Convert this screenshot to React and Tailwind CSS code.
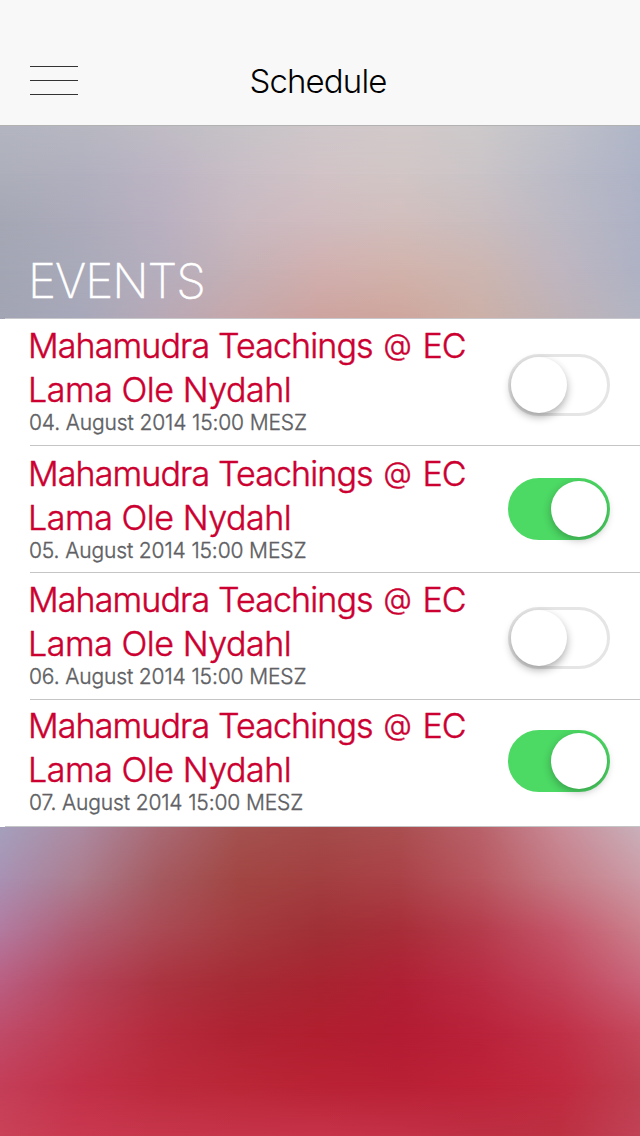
const EVENTS = [
  { date: '04. August 2014 15:00 MESZ', on: false, text: 'pt-[5px]', toggle: 'mt-[35px]' },
  { date: '05. August 2014 15:00 MESZ', on: true, text: 'pt-[6px]', toggle: 'mt-[32px]' },
  { date: '06. August 2014 15:00 MESZ', on: false, text: 'pt-[5px]', toggle: 'mt-[34px]' },
  { date: '07. August 2014 15:00 MESZ', on: true, text: 'pt-[4px]', toggle: 'mt-[30px]' },
];

// Colour grids for the soft backdrop: each row is a horizontal blend,
// and neighbouring rows fade into each other.
const SKY = [
  '#b3b5c0 #b6b7c1 #c0bcc5 #c6c3c7 #cfc7ca #d2c9ca #cdc9ca #c0c1ca #b0b6c7',
  '#adafba #b1b0bf #bcb4c3 #c9bec6 #d1c3c6 #d2c6c6 #cac4c7 #bbbbc7 #aeb3c6',
  '#a5a7b5 #acabbb #b9b0c0 #c9b9c0 #d0bbbf #d1bebc #cabdbf #bcb9c4 #aeb2c5',
  '#a3a6b4 #a9aab9 #b5aebd #c5b1b6 #d1b0af #d2b3ac #cdb6b1 #bfb6c0 #aeb2c4',
  '#a2a4b3 #a7a8ba #b8a9b6 #c6a7aa #cda39f #cea69d #cbb0a7 #bfb2b6 #b3b5c3',
];

const EMBER = [
  '#a5a0bd #ac8ba2 #a96a74 #a45250 #a44b4a #ab4f51 #b9626a #c98c98 #c9b0ba',
  '#a991b4 #ac7d8e #a55a60 #a24643 #a33f40 #aa4248 #b8565f #c47b85 #cc9ba6',
  '#b27ba0 #b05e74 #aa4a54 #a43b3f #a03036 #a82e39 #b53c4c #c4566a #cb808c',
  '#ba5f82 #b4445b #ab3441 #a62b35 #a82430 #b02035 #b92c43 #c14258 #c9647a',
  '#bf4b69 #bd3a50 #b52b3d #af2232 #b11f2f #b31c33 #b9223a #c02f46 #c5485c',
  '#c43e58 #c13048 #bb2a3c #ba2737 #b92234 #b92035 #bd2238 #c0293f #bd3f50',
  '#c94257 #c8384f #c6364b #c5344a #c6334a #c33147 #bd2f43 #bc3042 #c24256',
];

const blend = (row) => `linear-gradient(to right, ${row.split(' ').join(', ')})`;

function Backdrop({ grid }) {
  return (
    <div className="absolute inset-0 flex flex-col">
      {grid.slice(1).map((row, i) => (
        <div key={row} className="flex flex-1" style={{ backgroundImage: blend(grid[i]) }}>
          <div
            className="flex-1 [mask-image:linear-gradient(to_bottom,transparent,black)]"
            style={{ backgroundImage: blend(row) }}
          />
        </div>
      ))}
    </div>
  );
}

function Toggle({ on, className }) {
  return (
    <button
      role="switch"
      aria-checked={on}
      className={`flex h-[62px] w-[102px] shrink-0 rounded-full border-[3px] ${
        on ? 'justify-end border-[#4cd964] bg-[#4cd964]' : 'border-[#e5e5e5] bg-white'
      } ${className}`}
    >
      <span
        className={`size-14 rounded-full bg-white ${
          on ? 'shadow-[0_3px_8px_rgba(0,0,0,0.28)]' : 'shadow-[0_4px_8px_rgba(0,0,0,0.32)]'
        }`}
      />
    </button>
  );
}

export default function App() {
  return (
    <div className="flex h-[1136px] w-[640px] flex-col overflow-hidden bg-white font-['Inter',sans-serif] font-light">
      <header className="grid h-[126px] shrink-0 grid-cols-[1fr_auto_1fr] border-b border-[#b2b2b2] bg-[#f8f8f8] px-[30px] pt-[60px]">
        <button aria-label="Menu" className="mt-1.5 flex h-[29px] w-12 flex-col justify-between">
          <span className="h-px w-full bg-[#333]" />
          <span className="h-px w-full bg-[#333]" />
          <span className="h-px w-full bg-[#333]" />
        </button>
        <h1 className="-mt-px mr-[4px] h-[44px] text-[33px] leading-[44px] tracking-[-0.85px] text-black">Schedule</h1>
      </header>

      <section className="relative flex h-[192px] shrink-0 items-end px-[28px]">
        <Backdrop grid={SKY} />
        <h2 className="relative mb-[7px] text-[47.5px] font-extralight leading-[60px] tracking-[-1px] text-white [-webkit-text-stroke:0.4px]">
          EVENTS
        </h2>
      </section>

      <main className="flex h-[509px] shrink-0 flex-col bg-white">
        <div className="flex h-px shrink-0">
          <div className="w-[5px] bg-[#a2a4b3]" />
          <div className="flex-1 bg-[#c8c7cc]" />
        </div>
        {EVENTS.map((event, i) => (
          <div key={event.date} className="flex h-[127px] flex-col">
            <div className="flex flex-1 justify-between pr-[30px] pl-[28px]">
              <div className={event.text}>
                <p className="text-[34px] leading-[44px] tracking-[-0.45px] whitespace-nowrap text-[#cc0030] [-webkit-text-stroke:0.45px]">
                  <span className="tracking-[-0.87px]">
                    Mahamudra Teachings{' '}
                    <span className="mr-[3px] ml-[2px] align-[3px] text-[29px] leading-none">@</span> EC
                  </span>
                  <br />
                  Lama Ole Nydahl
                </p>
                <p className="pl-px text-[21px] leading-[22px] tracking-[-0.13px] whitespace-nowrap text-[#5e6063] [-webkit-text-stroke:0.35px]">
                  {event.date}
                </p>
              </div>
              <Toggle on={event.on} className={event.toggle} />
            </div>
            <div className={`h-px bg-[#c3c5c6] ${i === EVENTS.length - 1 ? 'ml-[5px]' : 'ml-[30px]'}`} />
          </div>
        ))}
      </main>

      <div className="relative flex-1">
        <Backdrop grid={EMBER} />
      </div>
    </div>
  );
}
